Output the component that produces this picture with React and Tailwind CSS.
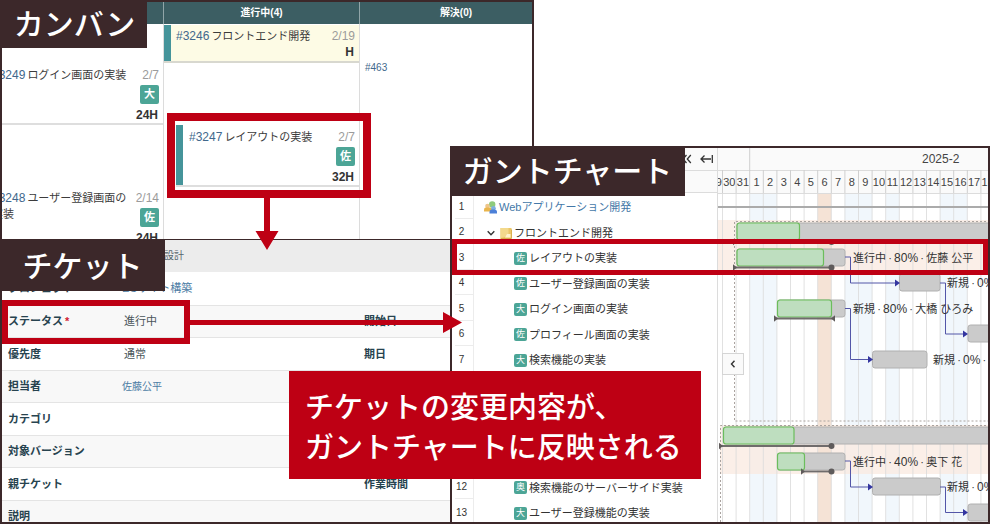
import React from "react";

const DAY_WIDTH = 13.6;
const FIRST_DAY_X = 749.7;
const dayX = (n) => FIRST_DAY_X + DAY_WIDTH * (n - 1);

const DAYS = [
  [-2, "29"],
  [-1, "30"],
  [0, "31"],
  ...Array.from({ length: 28 }, (_, i) => [i + 1, String(i + 1)]),
];
const HOLIDAYS = [1, 2, 8, 9, 11, 15, 16, 22, 23, 24];

const TASKS = [
  { name: "Webアプリケーション開発", kind: "project" },
  { name: "フロントエンド開発", kind: "parent" },
  { name: "レイアウトの実装", badge: "佐" },
  { name: "ユーザー登録画面の実装", badge: "佐" },
  { name: "ログイン画面の実装", badge: "大" },
  { name: "プロフィール画面の実装", badge: "佐" },
  { name: "検索機能の実装", badge: "大" },
  { name: "" },
  { name: "" },
  { name: "" },
  { name: "" },
  { name: "検索機能のサーバーサイド実装", badge: "奥" },
  { name: "ユーザー登録機能の実装", badge: "大" },
];

const BARS = [
  { y: 223, x: 737, end: 1400, done: 799.5 },
  { y: 249, x: 737, end: 845, done: 823.5 },
  { y: 274, x: 899.5, end: 940 },
  { y: 300, x: 777.5, end: 845, done: 831.5 },
  { y: 325, x: 968, end: 1022 },
  { y: 351, x: 872.5, end: 927 },
  { y: 427, x: 723.5, end: 1400, done: 794 },
  { y: 453, x: 777.5, end: 845, done: 804.5 },
  { y: 478, x: 872.5, end: 940.5 },
  { y: 504, x: 968, end: 1022 },
];

const LINKS = [
  [845, 257, 850.5, 283, 899],
  [940, 283, 945.5, 334, 967],
  [845, 308.5, 850.5, 359.5, 872],
  [845, 461, 850.5, 487, 872],
  [940, 487, 945.5, 512.5, 967],
];

const PROGRESS = [
  [734, 831.5, 242, false],
  [734, 831.5, 267.5, false],
  [775, 834, 318.5, true],
  [720, 831.5, 446, false],
  [802, 831.5, 471.5, false],
];

const LABELS = [
  [853, 262, "進行中", "80%", "佐藤 公平"],
  [947, 287, "新規", "0%", ""],
  [853, 313, "新規", "80%", "大橋 ひろみ"],
  [933, 364, "新規", "0%", ""],
  [853, 466, "進行中", "40%", "奥下 花"],
  [947, 491, "新規", "0%", ""],
];

const TICKET_ROWS = [
  { label: "プロジェクト", value: "ECサイト構築", link: true },
  { label: "ステータス", value: "進行中", required: true, other: "開始日" },
  { label: "優先度", value: "通常", other: "期日" },
  { label: "担当者", value: "佐藤公平", link: true, small: true },
  { label: "カテゴリ" },
  { label: "対象バージョン" },
  { label: "親チケット", other: "作業時間" },
  { label: "説明" },
];

function CardBody({ id, title, date, badge, hours }) {
  return (
    <div className="flex min-w-0 flex-1 justify-between">
      <p className="min-w-0 flex-1 text-[11px] leading-4 text-[#3c3c3c]">
        <a href="#ticket" className="mr-[2px] text-[12px] text-[#41688c]">
          {id}
        </a>
        {title}
      </p>
      <div className="flex w-7 flex-col items-end">
        <span className="text-[12px] leading-4 text-[#9b9b9b]">{date}</span>
        {badge && (
          <span className="mt-[2px] flex size-[19px] items-center justify-center rounded-[2px] bg-[#4ca596] text-[11px] font-bold leading-none text-white">
            {badge}
          </span>
        )}
        <span className={`pr-px text-[12px] font-bold leading-4 text-[#333] ${badge ? "mt-[3px]" : ""}`}>{hours}</span>
      </div>
    </div>
  );
}

function Kanban() {
  return (
    <section className="relative col-span-2 col-start-1 row-span-2 row-start-1 flex flex-col overflow-hidden border-2 border-b-0 border-[#3c282a] bg-white">
      <div className="grid h-[22px] shrink-0 grid-cols-[162px_196px_1fr] bg-[#3c5e63] text-center text-[10px] font-bold leading-[21px] text-white">
        <span className="border-r border-[#91a5a8]" />
        <span className="border-r border-[#91a5a8]">進行中(4)</span>
        <span className="pl-5">解決(0)</span>
      </div>
      <div className="grid min-h-0 flex-1 grid-cols-[162px_196px_1fr]">
        <div className="min-w-0 overflow-hidden border-r border-[#dcdcdc]">
          <div className="flex h-[101px] border-b-2 border-[#dedede] pr-[4px] pt-[43px]">
            <div className="-ml-[10px] flex flex-1">
              <CardBody id="#3249" title="ログイン画面の実装" date="2/7" badge="大" hours="24H" />
            </div>
          </div>
          <div className="flex pr-[4px] pt-[65px]">
            <div className="-ml-[10px] flex flex-1">
              <CardBody id="#3248" title="ユーザー登録画面の実装" date="2/14" badge="佐" hours="24H" />
            </div>
          </div>
        </div>
        <div className="min-w-0 border-r border-[#dcdcdc]">
          <div className="mt-px h-[38px] border-b-2 border-[#d8d8cf] bg-[#fdfbe5]">
            <div className="flex h-full border-l-[7px] border-[#45949a] pl-[5px] pr-[4px] pt-[3px]">
              <CardBody id="#3246" title="フロントエンド開発" date="2/19" hours="H" />
            </div>
          </div>
          <div className="ml-3 mt-[62px] h-[62px] border-b-2 border-[#dedede]">
            <div className="flex h-full border-l-[7px] border-[#45949a] pl-[6px] pr-[4px] pt-[4px]">
              <CardBody id="#3247" title="レイアウトの実装" date="2/7" badge="佐" hours="32H" />
            </div>
          </div>
        </div>
        <div className="pl-[5px] pt-9 text-[10px] leading-4">
          <a href="#463" className="text-[#41688c]">#463</a>
        </div>
      </div>
      <h2 className="absolute -left-[2px] -top-[2px] flex h-12 w-[147px] items-center justify-center bg-[#3c282a] pl-[2px] pt-[2px] text-[30px] font-medium leading-none text-white">
        カンバン
      </h2>
    </section>
  );
}

function Ticket() {
  return (
    <section className="relative col-start-1 row-start-3 overflow-hidden border-b-2 border-l-2 border-t border-[#3c282a] bg-white">
      <h3 className="h-8 bg-[#ececec] pl-[162px] text-[10px] leading-8 text-[#56666e]">設計</h3>
      <table className="w-full table-fixed border-collapse text-left text-[11px] leading-4 text-[#27434f]">
        <tbody>
          {TICKET_ROWS.map((row) => (
            <tr key={row.label} className="border-b border-[#e4e4e4] odd:h-[33px] even:h-8 even:bg-[#f8f8f8]">
              <th scope="row" className="w-[120px] p-0 pl-[6px] font-bold">
                {row.label}
                {row.required && <span className="ml-[2px] text-[#d02030]">*</span>}
              </th>
              <td className={row.link ? "w-[240px] p-0 text-[#4c7ca4]" : "w-[240px] p-0 pl-[2px] text-[#4a555a]"}>
                {row.link ? (
                  <a href="#link" className={row.small ? "text-[10px]" : ""}>{row.value}</a>
                ) : (
                  row.value
                )}
              </td>
              <td className="p-0 pl-[2px] font-bold">{row.other}</td>
            </tr>
          ))}
        </tbody>
      </table>
      <h2 className="absolute -left-[2px] -top-px flex h-[52px] w-[165px] items-center justify-center bg-[#3c282a] pt-[3px] text-[30px] font-medium leading-none text-white">
        チケット
      </h2>
    </section>
  );
}

function ProjectIcon() {
  return (
    <svg viewBox="0 0 13 13" className="size-[13px]" aria-hidden="true">
      <circle cx="8.200" cy="3.500" r="3.200" fill="#8fca7c" />
      <circle cx="3.500" cy="5" r="2.300" fill="#edc58a" />
      <path d="M0 10.500V8.500q0-2 2-2h4q2 0 2 2v2z" fill="#e9b54d" />
      <circle cx="9.500" cy="7.300" r="2.300" fill="#7daee0" />
      <path d="M5.500 12.500V11q0-2.500 2.500-2.500h2.500q2.500 0 2.500 2.500v1.500z" fill="#4c80d8" />
    </svg>
  );
}

function FolderIcon() {
  return (
    <svg viewBox="0 0 12 12" className="size-3" aria-hidden="true">
      <path d="M0.500 1h11v10h-11z" fill="#ebc668" />
      <path d="M0.500 1h8v8l-8 2z" fill="#f3d98c" />
      <path d="M7 7h3.500v3.500H5z" fill="#fff3cc" />
      <path d="M0.500 11.500h11v-9" fill="none" stroke="#d9b04e" />
    </svg>
  );
}

function TaskRow({ task, index }) {
  return (
    <li className="flex items-center text-[11px] leading-4 text-[#333] odd:h-[26px] even:h-[25px]">
      <span className="ml-[3px] flex h-full w-[19px] items-center justify-center border-b border-r border-[#ececec] pr-[5px] pt-[2px] text-[10px]">
        {task.name && index + 1}
      </span>
      {task.kind === "project" && (
        <a href="#project" className="ml-[10px] flex items-center gap-[2px] pt-[2px] text-[#4478a8]">
          <ProjectIcon />
          {task.name}
        </a>
      )}
      {task.kind === "parent" && (
        <span className="ml-[13px] flex items-center gap-[2px] pt-[2px]">
          <svg viewBox="0 0 8 8" className="mr-[3px] size-2" fill="none" stroke="#333" strokeWidth="1.400" aria-hidden="true">
            <path d="M0.700 2.200L4 5.700l3.300-3.500" />
          </svg>
          <FolderIcon />
          {task.name}
        </span>
      )}
      {task.badge && (
        <span className="ml-10 flex items-center gap-[2px] pt-[2px]">
          <span className="flex size-[13px] items-center justify-center rounded-[2px] bg-[#4ca596] text-[9px] leading-none text-white">
            {task.badge}
          </span>
          {task.name}
        </span>
      )}
    </li>
  );
}

function GanttChart() {
  return (
    <svg className="block size-full" aria-label="2025-2">
      <g transform="translate(-718 -148)">
        <rect x="718" y="148" width="900" height="45" fill="#fafafa" />
        {HOLIDAYS.map((d) => (
          <rect key={d} x={dayX(d)} y="193" width={DAY_WIDTH} height="400" fill="#f1f7fc" />
        ))}
        <rect x="718" y="220" width="900" height="50" fill="#f9e9e0" fillOpacity="0.75" />
        <rect x="720" y="425" width="900" height="49" fill="#f9e9e0" fillOpacity="0.75" />
        <rect x={dayX(6)} y="193" width={DAY_WIDTH} height="400" fill="#f5e3d6" />
        <path d="M718 170.500H1618M718 193.500H1618" stroke="#dcdcdc" />
        <path d={`M${FIRST_DAY_X} 148V171`} stroke="#cfcfcf" />
        {DAYS.map(([n, text]) => (
          <g key={n}>
            <path d={`M${dayX(n)} 170V193`} stroke="#cfcfcf" />
            <path d={`M${dayX(n)} 193V593`} stroke="#d9d9d9" strokeWidth="0.8" />
            <text x={dayX(n) + DAY_WIDTH / 2} y="186" textAnchor="middle" fontSize="11" fill="#444">
              {text}
            </text>
          </g>
        ))}
        <text x="922" y="163" fontSize="12" fill="#444">2025-2</text>
        <path d="M718 207H1618" stroke="#ababab" strokeWidth="2" />
        <g fill="none" stroke="#aaa39f" strokeDasharray="2 2">
          <path d="M1618 221.500H734.500V421H1618" />
          <path d="M1618 425.500H720.500V593" />
        </g>
        {BARS.map((b) => (
          <g key={`${b.x}-${b.y}`}>
            <rect x={b.x} y={b.y} width={b.end - b.x} height="17" rx="2.500" fill="#cbcbcb" stroke="#b0b0b0" />
            {b.done && (
              <rect x={b.x} y={b.y} width={b.done - b.x} height="17" rx="2.500" fill="#bedebf" stroke="#6cbd5c" strokeWidth="1.200" />
            )}
          </g>
        ))}
        {PROGRESS.map(([x1, x2, y, flag]) => (
          <g key={y} fill="#5f5b5b">
            <path d={`M${x1} ${y}H${x2}`} stroke="#706c6c" strokeWidth="1.800" />
            <path d={`M${x1 - 1} ${y - 3.2}l4 3.200l-4 3.200z`} />
            {flag ? <path d={`M${x2 + 1} ${y - 3.2}l-4 3.200l4 3.200z`} /> : <circle cx={x2} cy={y} r="3" />}
          </g>
        ))}
        {LINKS.map(([x1, y1, mid, y2, x2]) => (
          <g key={`${x1}-${y1}`}>
            <path d={`M${x1} ${y1}H${mid}V${y2}H${x2 - 3}`} fill="none" stroke="#5356a8" />
            <path d={`M${x2 - 4} ${y2 - 3.5}l5 3.500l-5 3.500z`} fill="#3436a0" />
          </g>
        ))}
        {LABELS.map(([x, y, status, rate, owner]) => (
          <text key={y} x={x} y={y} fontSize="11" fill="#333">
            {status}
            {"\u2009·\u2009"}
            <tspan fontSize="12">{rate}</tspan>
            {"\u2009·\u2009"}
            {owner}
          </text>
        ))}
      </g>
    </svg>
  );
}

function Gantt() {
  return (
    <section className="relative col-span-2 col-start-2 row-span-2 row-start-2 flex overflow-hidden border-2 border-[#3c282a] bg-white">
      <div className="flex w-[266px] shrink-0 flex-col border-r border-[#dcdcdc]">
        <div className="flex h-[23px] shrink-0 items-center justify-end gap-2 border-b border-[#dcdcdc] bg-[#fafafa] pr-1">
          <button type="button" aria-label="折りたたむ">
            <svg viewBox="0 0 10 10" className="size-[10px]" fill="none" stroke="#333" strokeWidth="1.300">
              <path d="M4.500 1L1 5l3.500 4M8.800 1L5.300 5l3.500 4" />
            </svg>
          </button>
          <button type="button" aria-label="左端へ">
            <svg viewBox="0 0 13 10" className="h-[10px] w-[13px]" fill="none" stroke="#333" strokeWidth="1.300">
              <path d="M4.500 1.500L1 5l3.500 3.500M1 5h10M12.300 1v8" />
            </svg>
          </button>
        </div>
        <div className="h-[22px] shrink-0 border-b border-[#dcdcdc] bg-[#fafafa]" />
        <ul>
          {TASKS.map((task, i) => (
            <TaskRow key={i} task={task} index={i} />
          ))}
        </ul>
      </div>
      <div className="relative min-w-0 flex-1">
        <GanttChart />
        <button
          type="button"
          aria-label="前へ"
          className="absolute left-1 top-[205px] flex size-[22px] items-center justify-center border border-[#d5d5d5] bg-[#fafafa]"
        >
          <svg viewBox="0 0 8 8" className="size-2" fill="none" stroke="#333" strokeWidth="1.400">
            <path d="M5.500 0.800L2.500 4l3 3.200" />
          </svg>
        </button>
      </div>
      <h2 className="absolute -left-[2px] -top-[2px] flex h-[50px] w-[235px] items-center justify-center bg-[#3c282a] pt-[2px] text-[30px] font-medium leading-none text-white">
        ガントチャート
      </h2>
    </section>
  );
}

function Annotations() {
  return (
    <>
      <div className="pointer-events-none absolute left-[167px] top-[113px] h-[85px] w-[204px] border-8 border-[#be0014]" />
      <div className="pointer-events-none absolute left-[2px] top-[300px] h-11 w-[188px] border-[6px] border-[#be0014]" />
      <div className="pointer-events-none absolute left-[452px] right-[2px] top-[239px] h-9 border-[5px] border-[#be0014]" />
      <svg className="pointer-events-none absolute left-0 top-0 h-[350px] w-[470px]" fill="#be0014" aria-hidden="true">
        <path d="M264 197h6v34h8.500L267 250l-11.500-19H264z" />
        <path d="M190 320h253v-8l19 10.500L443 333v-8H190z" />
      </svg>
      <p className="absolute left-[289px] top-[371px] w-[412px] bg-[#be0014] pb-[11px] pl-4 pt-[17px] text-[29px] font-medium leading-10 text-white">
        チケットの変更内容が、
        <br />
        ガントチャートに反映される
      </p>
    </>
  );
}

export default function App() {
  return (
    <main className="relative grid h-screen min-h-[525px] grid-cols-[450px_84px_1fr] grid-rows-[146px_93px_1fr] overflow-hidden bg-white pb-px font-['Liberation_Sans','Noto_Sans_CJK_JP',sans-serif]">
      <Kanban />
      <Ticket />
      <Gantt />
      <Annotations />
    </main>
  );
}
